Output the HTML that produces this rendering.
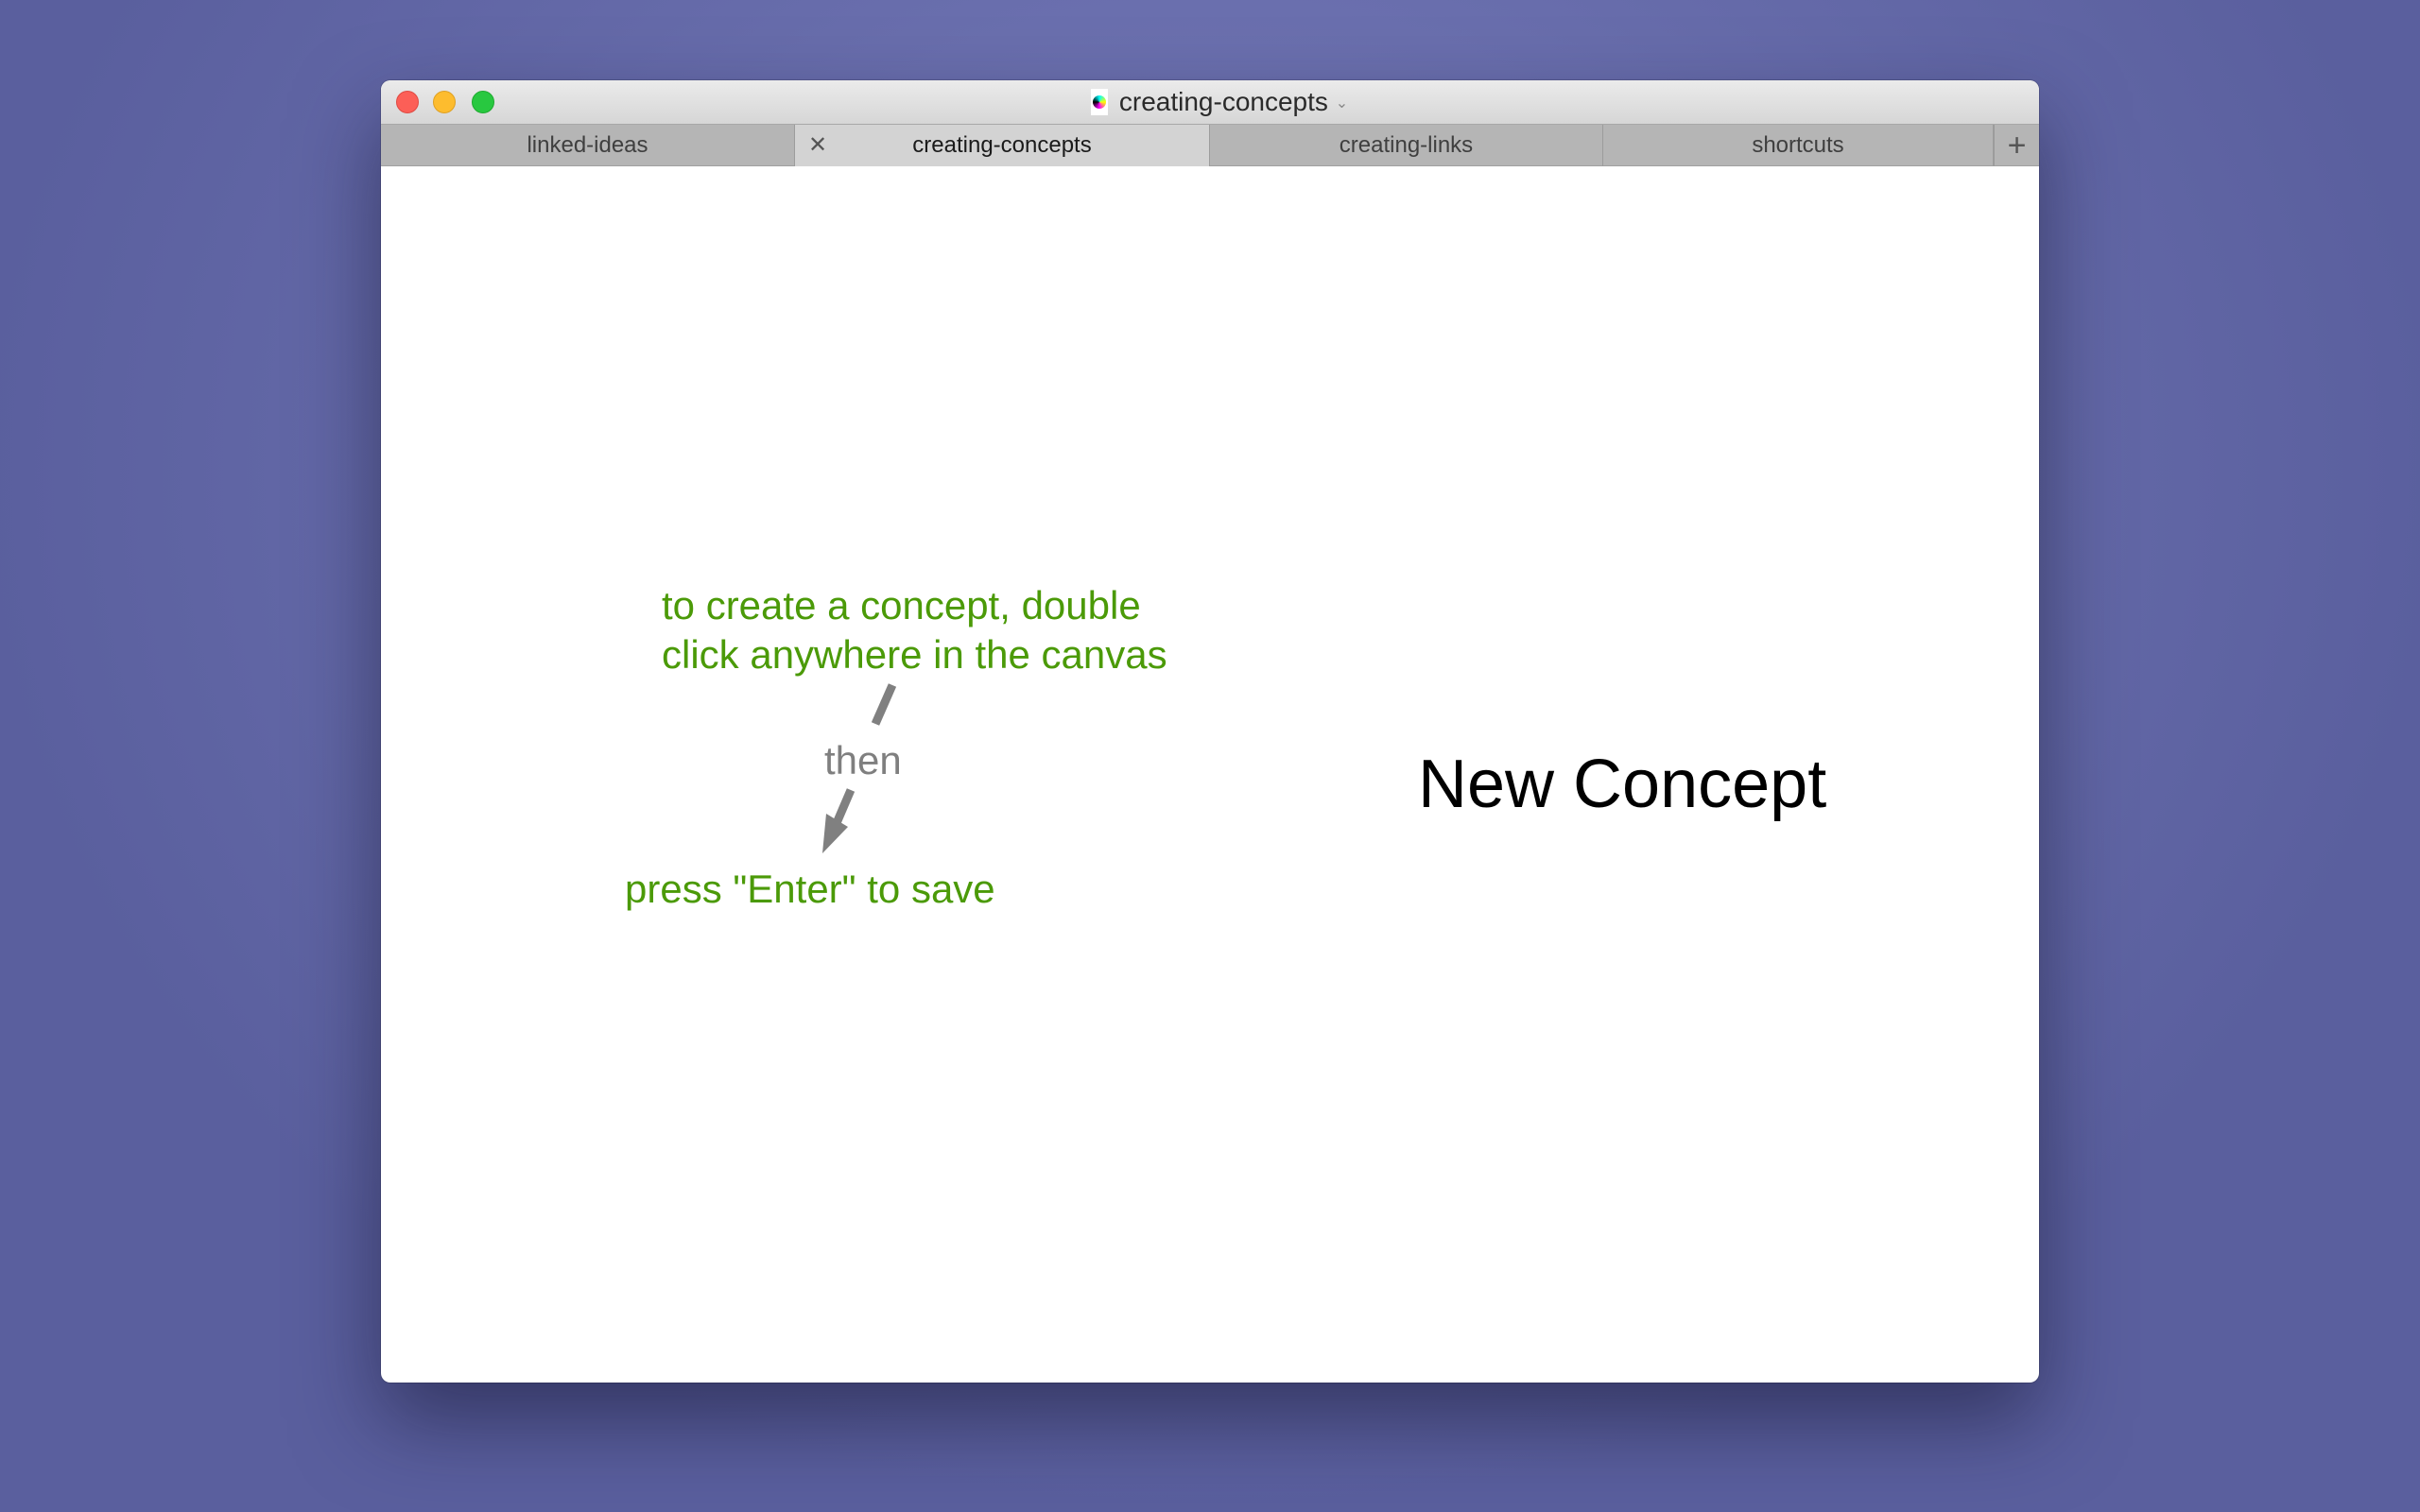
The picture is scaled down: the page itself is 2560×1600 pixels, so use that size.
<!DOCTYPE html>
<html><head><meta charset="utf-8"><style>
html,body{margin:0;padding:0;width:2560px;height:1600px;overflow:hidden}
body{background:radial-gradient(ellipse 1300px 1100px at 1280px 500px,#7478b4 0%,#6a6fae 45%,#5a5f9e 100%);font-family:"Liberation Sans",sans-serif;position:relative}
.win{position:absolute;left:403px;top:85px;width:1754px;height:1378px;background:#fff;border-radius:10px;box-shadow:0 40px 90px rgba(20,20,50,.55),0 0 0 1px rgba(0,0,0,.15);overflow:hidden}
.title{position:absolute;left:0;top:0;width:100%;height:46px;background:linear-gradient(#ebebeb,#d6d6d6)}
.dot{position:absolute;top:11px;width:24px;height:24px;border-radius:50%}
.ttl{position:absolute;left:20px;right:0;top:7px;text-align:center;font-size:28px;color:#2a2a2a}
.tabs{position:absolute;left:0;top:46px;width:100%;height:45px;background:#b5b5b5;border-top:1px solid #a8a8a8;border-bottom:1px solid #a0a0a0;box-sizing:border-box}
.tab{position:absolute;top:0;height:44px;line-height:44px;text-align:center;font-size:24px;color:#3f3f3f;border-right:1px solid #9c9c9c;box-sizing:border-box}
.txt{position:absolute;white-space:nowrap}
</style></head><body>
<div class="win">
 <div class="title">
  <div class="dot" style="left:16px;background:#fc5f57;border:1px solid #de4a42;box-sizing:border-box"></div>
  <div class="dot" style="left:55px;background:#fdbc2e;border:1px solid #dea023;box-sizing:border-box"></div>
  <div class="dot" style="left:96px;background:#28c840;border:1px solid #1eaa2f;box-sizing:border-box"></div>
  <div class="ttl"><span style="display:inline-block;width:18px;height:28px;background:#fff;vertical-align:-5px;margin-right:12px;position:relative"><span style="position:absolute;left:2px;top:7px;width:14px;height:14px;border-radius:50%;background:conic-gradient(#0ff,#ff0,#f0f,#000,#0ff)"></span></span>creating-concepts <span style="font-size:16px;color:#888;vertical-align:3px">&#8964;</span></div>
 </div>
 <div class="tabs">
  <div class="tab" style="left:0;width:438px">linked-ideas</div>
  <div class="tab" style="left:438px;width:439px;background:#d3d3d3;color:#1a1a1a">creating-concepts<span style="position:absolute;left:14px;top:0;color:#555;font-size:24px">&#x2715;</span></div>
  <div class="tab" style="left:877px;width:416px">creating-links</div>
  <div class="tab" style="left:1293px;width:413px">shortcuts</div>
  <div class="tab" style="left:1706px;width:48px;border:none;font-size:34px;color:#555;border-left:1px solid #9c9c9c">+</div>
 </div>
 <div class="txt" style="left:297px;top:530px;font-size:42px;line-height:52px;color:#4b9a08">to create a concept, double<br>click anywhere in the canvas</div>
 <div class="txt" style="left:469px;top:696px;font-size:42px;color:#7f7f7f">then</div>
 <div class="txt" style="left:258px;top:832px;font-size:42px;color:#4b9a08">press "Enter" to save</div>
 <div class="txt" style="left:1097px;top:704px;font-size:72px;color:#000">New Concept</div>
 <svg style="position:absolute;left:0;top:0" width="1754" height="1378">
  <line x1="541" y1="640" x2="523" y2="681" stroke="#808080" stroke-width="9"/>
  <line x1="497" y1="751" x2="482" y2="786" stroke="#808080" stroke-width="9"/>
  <polygon points="467,818 471,776 494,790" fill="#808080"/>
 </svg>
</div>
</body></html>
